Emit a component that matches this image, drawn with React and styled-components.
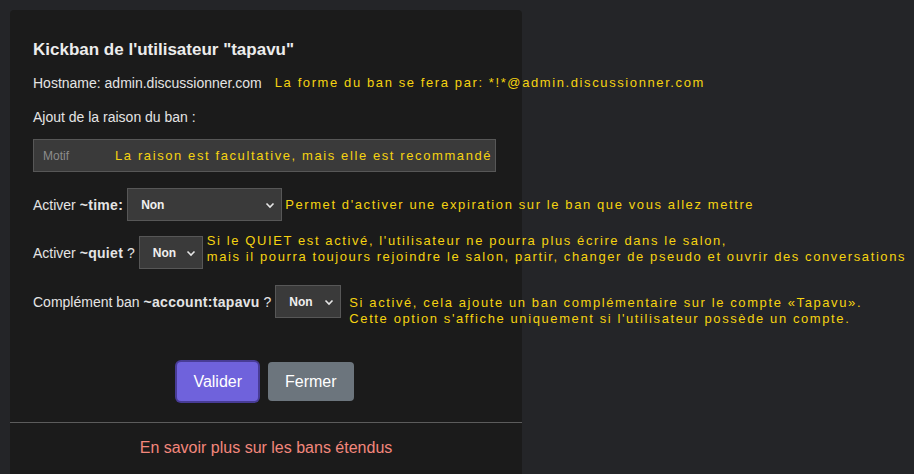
import React from "react"
import styled, { createGlobalStyle } from "styled-components"

const Global = createGlobalStyle`
    html, body {
        margin: 0;
        padding: 0;
        background: #242528;
        height: 100%;
        overflow: hidden;
    }
    body {
        font-family: "Liberation Sans", Arial, sans-serif;
        color: #e4e4e4;
    }
`

const Page = styled.div`
    padding: 10px 0 0 10px;
    height: 474px;
    box-sizing: border-box;
`

const Modal = styled.div`
    width: 512px;
    height: 100%;
    background: #1b1b1b;
    border-radius: 4px 4px 0 0;
    display: flex;
    flex-direction: column;
`

const Body = styled.div`
    padding: 30px 26px 0 23px;
    display: flex;
    flex-direction: column;
`

const Title = styled.h2`
    margin: 0;
    font-size: 17px;
    font-weight: bold;
    line-height: 20px;
    color: #ececec;
    white-space: nowrap;
`

const Line = styled.div`
    display: flex;
    align-items: center;
    margin-top: ${(p) => p.$top}px;
    font-size: 14px;
    line-height: 20px;
    white-space: nowrap;
`

const Key = styled.b`
    letter-spacing: 0.3px;
`

const Note = styled.span`
    font-family: "Liberation Sans", Arial, sans-serif;
    font-size: 13px;
    line-height: 16px;
    letter-spacing: 1.6px;
    color: #f5d311;
    white-space: nowrap;
    margin-left: ${(p) => p.$left || 0}px;
    align-self: ${(p) => (p.$shift !== undefined ? "flex-start" : "center")};
    margin-top: ${(p) => p.$shift || 0}px;
    margin-bottom: ${(p) => (p.$shift !== undefined ? "-30px" : "0")};
`

const Field = styled.div`
    margin-top: 12px;
    height: 33px;
    box-sizing: border-box;
    border: 1px solid #575757;
    background: #3a3a3a;
    display: flex;
    align-items: center;
    padding-left: 9px;
`

const Placeholder = styled.span`
    font-size: 12px;
    color: #8c8c8c;
`

const Select = styled.div`
    width: ${(p) => p.$w}px;
    height: 33px;
    box-sizing: border-box;
    flex: none;
    margin-left: 4px;
    border: 1px solid #575757;
    background: #3a3a3a;
    display: flex;
    align-items: center;
    justify-content: space-between;
    padding: 0 6px 0 13px;
    font-size: 12px;
    font-weight: bold;
    color: #f0f0f0;
`

const Buttons = styled.div`
    margin-top: 44px;
    display: flex;
    justify-content: center;
    align-items: center;
    gap: 8px;
`

const Button = styled.button`
    font-family: "Liberation Sans", Arial, sans-serif;
    font-size: 16px;
    color: #fff;
    border: none;
    border-radius: 4px;
    height: 39px;
    padding: 0 ${(p) => p.$px}px;
    background: ${(p) => p.$bg};
    box-shadow: ${(p) => (p.$focus ? "0 0 0 2px #483c96" : "none")};
    margin: ${(p) => (p.$focus ? "0 2px" : "0")};
    cursor: pointer;
`

const Footer = styled.div`
    margin-top: 21px;
    border-top: 1px solid #5c5c5c;
    padding-top: 15px;
    text-align: center;
    font-size: 16px;
    line-height: 20px;
    color: #f3877c;
`

const Chevron = () => (
    <svg width="10" height="10" viewBox="0 0 10 10">
        <path d="M1.5 3.5 L5 7 L8.5 3.5" fill="none" stroke="#e6e6e6" strokeWidth="1.6" />
    </svg>
)

const Choice = ({ w }) => (
    <Select $w={w}>
        <span>Non</span>
        <Chevron />
    </Select>
)

const App = () => {
    return (
        <Page>
            <Global />
            <Modal>
                <Body>
                    <Title>Kickban de l'utilisateur "tapavu"</Title>
                    <Line $top={13}>
                        Hostname: admin.discussionner.com
                        <Note $left={13}>La forme du ban se fera par: *!*@admin.discussionner.com</Note>
                    </Line>
                    <Line $top={14}>Ajout de la raison du ban :</Line>
                    <Field>
                        <Placeholder>Motif</Placeholder>
                        <Note $left={46}>La raison est facultative, mais elle est recommandé</Note>
                    </Field>
                    <Line $top={16}>
                        <span>Activer <Key>~time:</Key></span>
                        <Choice w={155} />
                        <Note $left={3}>Permet d'activer une expiration sur le ban que vous allez mettre</Note>
                    </Line>
                    <Line $top={15}>
                        <span>Activer <Key>~quiet</Key> ?</span>
                        <Choice w={64} />
                        <Note $left={4} $shift={-3}>
                            Si le QUIET est activé, l'utilisateur ne pourra plus écrire dans le salon,
                            <br />
                            mais il pourra toujours rejoindre le salon, partir, changer de pseudo et ouvrir des conversations
                        </Note>
                    </Line>
                    <Line $top={16}>
                        <span>Complément ban <Key>~account:tapavu</Key> ?</span>
                        <Choice w={66} />
                        <Note $left={8} $shift={10}>
                            Si activé, cela ajoute un ban complémentaire sur le compte «Tapavu».
                            <br />
                            Cette option s'affiche uniquement si l'utilisateur possède un compte.
                        </Note>
                    </Line>
                    <Buttons>
                        <Button $bg="#6f62dc" $px={16} $focus>Valider</Button>
                        <Button $bg="#6c757d" $px={17}>Fermer</Button>
                    </Buttons>
                </Body>
                <Footer>En savoir plus sur les bans étendus</Footer>
            </Modal>
        </Page>
    )
}

export default App
